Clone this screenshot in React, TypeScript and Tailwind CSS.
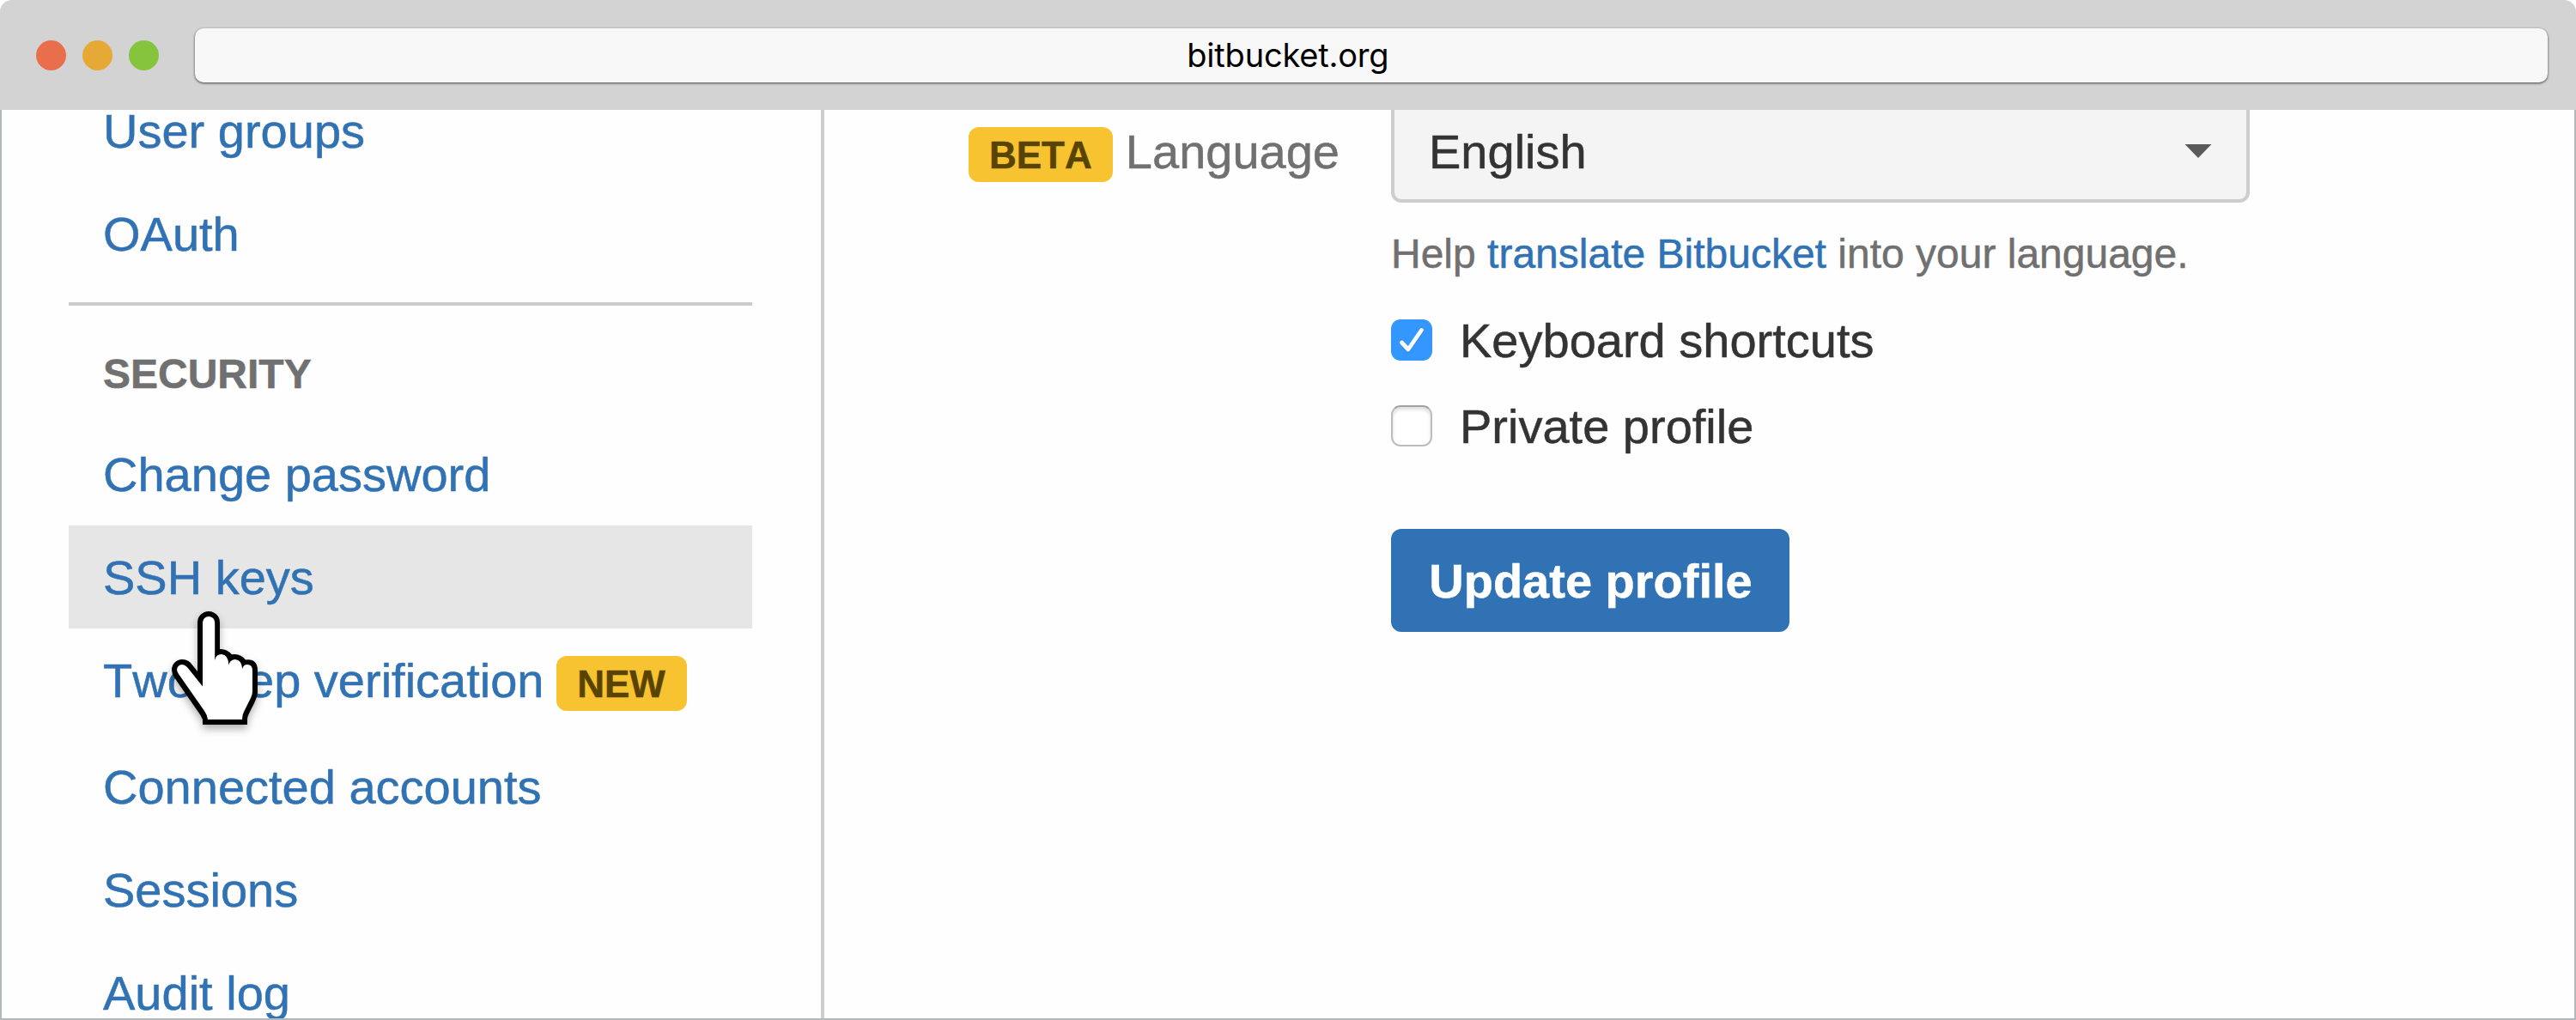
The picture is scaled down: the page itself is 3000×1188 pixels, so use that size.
import React from "react";

function Badge({ children, className = "" }: { children: string; className?: string }) {
  return (
    <span
      className={`block h-[64px] shrink-0 rounded-xl bg-[#f7c331] text-center text-[44px] font-bold leading-[65px] text-[#594300] ${className}`}
    >
      {children}
    </span>
  );
}

function PointerCursor() {
  return (
    <svg
      className="pointer-events-none absolute left-[100px] top-[78px] z-10 overflow-visible drop-shadow-[0_5px_5px_rgba(0,0,0,0.3)]"
      width="150"
      height="180"
      viewBox="0 0 150 180"
    >
      <path
        fill="#000"
        d="M50 35A13 13 0 0 1 76 35V66Q84 65.5 90 72.2Q100 70.5 106 78.5Q120 77 120 91V116Q120 121 117 127L110 141Q108 145 108 148V154H56V148L53.5 143L23 99Q20 94.5 20 90A12.2 12.2 0 0 1 32 78Q38 78 42 82L50 92Z"
      />
      <path
        fill="#fff"
        d="M56 35A7.1 7.1 0 0 1 70.2 35V79Q71.5 72 78 72Q86 72.5 86.4 84.5Q88 78 94 78Q101.5 78.5 102.2 89Q103.5 84 108 84Q114 84 114 91V115Q114 119 112 123L104 139Q102 143 102 148H62Q61.5 143 58 138L28 95Q26 92 26 90A6.2 6.2 0 0 1 32 84Q35 84 38 87L56 109.5Z"
      />
    </svg>
  );
}

type Item = { label: string; badge?: string; active?: boolean };

const account: Item[] = [{ label: "User groups" }, { label: "OAuth" }];
const security: Item[] = [
  { label: "Change password" },
  { label: "SSH keys", active: true },
  { label: "Two-step verification", badge: "NEW" },
  { label: "Connected accounts" },
  { label: "Sessions" },
  { label: "Audit log" },
];

function NavItem({ label, badge, active }: Item) {
  return (
    <li
      className={`relative flex shrink-0 items-start px-[40px] ${active ? "bg-[#e6e6e6]" : ""} ${
        badge ? "h-[124px]" : "h-[120px]"
      }`}
    >
      <a className="block whitespace-nowrap leading-[121px] text-[#3072b3]">{label}</a>
      {badge && <Badge className="ml-[14px] mt-[32px] w-[152px]">{badge}</Badge>}
      {active && <PointerCursor />}
    </li>
  );
}

function Checkbox({ checked }: { checked?: boolean }) {
  return checked ? (
    <span className="block size-[48px] rounded-[11px] bg-[#3496ff]">
      <svg width="48" height="48" viewBox="0 0 48 48" fill="none" strokeLinecap="round" strokeLinejoin="round">
        <path d="M12.5 28.5L20 37L35.5 14.5" stroke="#2a86ea" strokeWidth="4" />
        <path d="M12.5 27L20 35L35.5 12.5" stroke="#fff" strokeWidth="4.8" />
      </svg>
    </span>
  ) : (
    <span className="block size-[48px] rounded-[11px] border-2 border-[#bdbdbd] border-t-[#a3a3a3] bg-white shadow-[inset_0_3px_4px_rgba(0,0,0,0.14)]" />
  );
}

function Option({ label, checked }: { label: string; checked?: boolean }) {
  return (
    <label className="flex h-[100px] items-start">
      <Checkbox checked={checked} />
      <span className="ml-[32px] -mt-[16px] whitespace-nowrap leading-[81px]">{label}</span>
    </label>
  );
}

export default function App() {
  return (
    <div className="flex h-[1188px] w-[3000px] flex-col overflow-hidden bg-white font-['Liberation_Sans',Arial,sans-serif] text-[56px] text-[#333] [font-kerning:none] [font-variant-ligatures:none]">
      <header className="flex h-[128px] shrink-0 items-center rounded-t-[14px] bg-[#d3d3d3] pl-[42px] pr-[33px]">
        <div className="flex gap-[18.8px]">
          <span className="size-[35px] rounded-full bg-[#e96f4c]" />
          <span className="size-[35px] rounded-full bg-[#e6a935]" />
          <span className="size-[35px] rounded-full bg-[#86c43d]" />
        </div>
        <div className="ml-[42px] h-[63px] grow rounded-[10px] bg-[#f8f8f8] pr-[194px] text-center font-['Inter',sans-serif] text-[38px] leading-[63px] tracking-[-0.2px] text-black shadow-[0_1px_3px_rgba(0,0,0,0.7)] [font-kerning:normal]">
          bitbucket.org
        </div>
      </header>

      <div className="flex min-h-0 grow overflow-hidden border-x-2 border-b-2 border-[#b3b8bb] bg-[#fefefe] [-webkit-text-stroke-width:0.5px]">
        <nav className="w-[958px] shrink-0 border-r-4 border-[#cdcdcd] pl-[78px] pr-[80px]">
          <ul className="-mt-[36px]">
            {account.map((item) => (
              <NavItem key={item.label} {...item} />
            ))}
          </ul>
          <hr className="mt-[20px] border-0 border-t-4 border-[#cccccc]" />
          <h2 className="h-[136px] px-[40px] pt-[16px] text-[48px] font-bold leading-[127px] text-[#707070]">
            SECURITY
          </h2>
          <ul>
            {security.map((item) => (
              <NavItem key={item.label} {...item} />
            ))}
          </ul>
        </nav>

        <main className="flex grow">
          <div className="flex h-[120px] w-[600px] shrink-0 items-start justify-end pt-[20px]">
            <Badge className="w-[168px]">BETA</Badge>
            <span className="ml-[15px] -mt-[12px] leading-[81px] text-[#707070]">Language</span>
          </div>
          <form className="ml-[60px] flex w-[1000px] flex-col items-start">
            <div className="-mt-[12px] flex h-[120px] w-full items-start justify-between rounded-xl border-4 border-[#cdcdcd] bg-[#f4f4f4] pl-[40px] pr-[40px]">
              <span className="mt-[16px] leading-[81px]">English</span>
              <svg className="mt-[48px]" width="32" height="16" viewBox="0 0 32 16">
                <path d="M0.5 0H31.5L16 16Z" fill="#5a5a5a" />
              </svg>
            </div>
            <p className="mt-[27px] h-[88px] whitespace-nowrap text-[48px] leading-[65px] text-[#707070]">
              Help <a className="text-[#3072b3]">translate Bitbucket</a> into your language.
            </p>
            <div className="mt-[21px]">
              <Option label="Keyboard shortcuts" checked />
              <Option label="Private profile" />
            </div>
            <button
              type="button"
              className="mt-[44px] h-[120px] w-[464px] rounded-xl bg-[#3072b3] pl-px text-center font-bold leading-[121px] text-white"
            >
              Update profile
            </button>
          </form>
        </main>
      </div>
    </div>
  );
}
